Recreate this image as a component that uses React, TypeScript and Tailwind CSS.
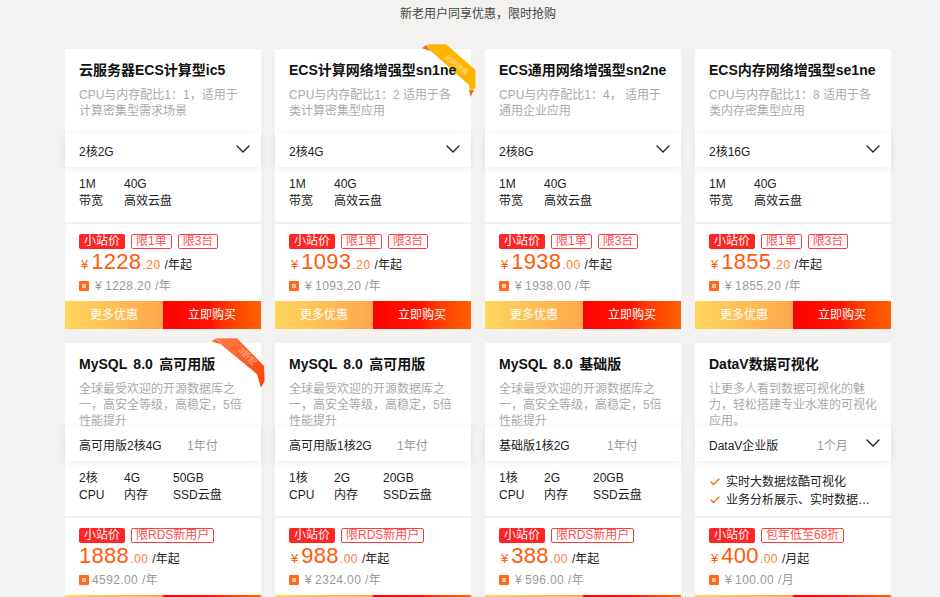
import { ChevronDown, Check } from "lucide-react";

type Product = {
  title: string;
  desc: string;
  option: string;
  term?: string;
  chevron?: boolean;
  specs?: string[][];
  checks?: string[];
  tags: string[];
  yen?: boolean;
  price: string;
  cents: string;
  unit: string;
  old: string;
  oldYen?: boolean;
  ribbon?: "gold" | "red";
};

const disk = [
  ["1M", "带宽"],
  ["40G", "高效云盘"],
];

const PRODUCTS: Product[] = [
  { title: "云服务器ECS计算型ic5", desc: "CPU与内存配比1：1，适用于计算密集型需求场景", option: "2核2G", chevron: true, specs: disk, tags: ["限1单", "限3台"], yen: true, price: "1228", cents: ".20", unit: "/年起", old: "1228.20 /年", oldYen: true },
  { title: "ECS计算网络增强型sn1ne", desc: "CPU与内存配比1：2 适用于各类计算密集型应用", option: "2核4G", chevron: true, specs: disk, tags: ["限1单", "限3台"], yen: true, price: "1093", cents: ".20", unit: "/年起", old: "1093.20 /年", oldYen: true, ribbon: "gold" },
  { title: "ECS通用网络增强型sn2ne", desc: "CPU与内存配比1：4， 适用于通用企业应用", option: "2核8G", chevron: true, specs: disk, tags: ["限1单", "限3台"], yen: true, price: "1938", cents: ".00", unit: "/年起", old: "1938.00 /年", oldYen: true },
  { title: "ECS内存网络增强型se1ne", desc: "CPU与内存配比1：8 适用于各类内存密集型应用", option: "2核16G", chevron: true, specs: disk, tags: ["限1单", "限3台"], yen: true, price: "1855", cents: ".20", unit: "/年起", old: "1855.20 /年", oldYen: true },
  { title: "MySQL 8.0 高可用版", desc: "全球最受欢迎的开源数据库之一，高安全等级，高稳定，5倍性能提升", option: "高可用版2核4G", term: "1年付", specs: [["2核", "CPU"], ["4G", "内存"], ["50GB", "SSD云盘"]], tags: ["限RDS新用户"], price: "1888", cents: ".00", unit: "/年起", old: "4592.00 /年", ribbon: "red" },
  { title: "MySQL 8.0 高可用版", desc: "全球最受欢迎的开源数据库之一，高安全等级，高稳定，5倍性能提升", option: "高可用版1核2G", term: "1年付", specs: [["1核", "CPU"], ["2G", "内存"], ["20GB", "SSD云盘"]], tags: ["限RDS新用户"], yen: true, price: "988", cents: ".00", unit: "/年起", old: "2324.00 /年", oldYen: true },
  { title: "MySQL 8.0 基础版", desc: "全球最受欢迎的开源数据库之一，高安全等级，高稳定，5倍性能提升", option: "基础版1核2G", term: "1年付", specs: [["1核", "CPU"], ["2G", "内存"], ["20GB", "SSD云盘"]], tags: ["限RDS新用户"], yen: true, price: "388", cents: ".00", unit: "/年起", old: "596.00 /年", oldYen: true },
  { title: "DataV数据可视化", desc: "让更多人看到数据可视化的魅力，轻松搭建专业水准的可视化应用。", option: "DataV企业版", term: "1个月", chevron: true, checks: ["实时大数据炫酷可视化", "业务分析展示、实时数据…"], tags: ["包年低至68折"], yen: true, price: "400", cents: ".00", unit: "/月起", old: "100.00 /月", oldYen: true },
];

const GoldRibbon = () => (
  <div className="absolute left-[147px] top-[-5px] h-[55px] w-[55px]">
    <svg width="55" height="55" viewBox="0 0 55 55" className="absolute inset-0">
      <path d="M0 4.3 L4 1 L9 7 Z" fill="#e8702a" />
      <path d="M47 46 L52 46 L48.5 53 Z" fill="#e8702a" />
      <path d="M5 .3 L24 .3 L53.5 26 L53.5 44 L48 47 L47 41 L7.7 6 Z" fill="#ffb400" />
    </svg>
    <span className="absolute left-[16px] top-[16px] w-[36px] rotate-[40deg] whitespace-nowrap text-center text-[7px] leading-[10px] text-white/60">
      全网特惠
    </span>
  </div>
);

const RedRibbon = () => (
  <div className="absolute left-[146px] top-[-5px] h-[55px] w-[55px]">
    <svg width="55" height="55" viewBox="0 0 55 55" className="absolute inset-0">
      <defs>
        <linearGradient id="rb-red" x1="0" y1="0" x2="1" y2="1">
          <stop offset="0" stopColor="#ff8048" />
          <stop offset="1" stopColor="#ff3c00" />
        </linearGradient>
      </defs>
      <path d="M.7 3.3 L4.7 .7 L9 6 Z" fill="#f2682e" />
      <path d="M47 40 L53.5 43 L50 50 Z" fill="#f2682e" />
      <path d="M4.7 .3 L26 .3 L53 28 L53.5 43 L50 48 L46 36 L9 5.7 Z" fill="url(#rb-red)" />
    </svg>
    <span className="absolute left-[18px] top-[14px] w-[36px] rotate-[45deg] whitespace-nowrap text-center text-[8px] leading-[10px] text-white/60">
      3折起
    </span>
  </div>
);

const Card = ({ p }: { p: Product }) => (
  <div className="relative flex h-[280px] w-[196px] flex-col bg-white">
    {p.ribbon === "gold" && <GoldRibbon />}
    {p.ribbon === "red" && <RedRibbon />}
    <div className="h-[84px] shrink-0 px-[14px] pt-[12px]">
      <h3 className="relative z-10 whitespace-nowrap text-[14px] font-bold leading-[18px] text-[#111] [word-spacing:2.5px]">{p.title}</h3>
      <p className="mt-[8px] text-[12px] leading-[16px] text-[#aaa]">{p.desc}</p>
    </div>
    <div className="relative flex h-[34px] shrink-0 items-center bg-white pl-[14px] pr-[6px] pt-[3px] shadow-[0_1px_8px_rgba(0,0,0,0.08)]">
      <span className="w-[108px] shrink-0 whitespace-nowrap text-[12px] text-[#222]">{p.option}</span>
      {p.term && <span className="text-[12px] text-[#999]">{p.term}</span>}
      {p.chevron && <ChevronDown className="ml-auto h-[24px] w-[24px] -translate-y-[3px] text-[#222]" strokeWidth={1.4} />}
    </div>
    <div className={`h-[57px] shrink-0 border-b-2 border-[#f2f2f2] px-[14px] ${p.checks ? "pt-[12px]" : "pt-[9px]"}`}>
      {p.specs && (
        <div className="flex text-[12px] leading-[17px] text-[#222]">
          {p.specs.map((col, i) => (
            <div key={col[1]} className={i === 0 ? "w-[45px]" : "w-[49px] whitespace-nowrap"}>
              <div>{col[0]}</div>
              <div>{col[1]}</div>
            </div>
          ))}
        </div>
      )}
      {p.checks && (
        <div className="flex flex-col text-[12px] leading-[18px] text-[#222]">
          {p.checks.map((c) => (
            <div key={c} className="flex items-center gap-[5px] whitespace-nowrap">
              <Check className="h-[12px] w-[12px] text-[#ff6a00]" strokeWidth={2.5} />
              <span>{c}</span>
            </div>
          ))}
        </div>
      )}
    </div>
    <div className="h-[77px] shrink-0 px-[14px] pt-[10px]">
      <div className="flex h-[15px] items-stretch gap-[6px] text-[12px] leading-[14px]">
        <span className="w-[46px] rounded-[2px] bg-[#ff2525] text-center text-white">小站价</span>
        {p.tags.map((t) => (
          <span key={t} className="whitespace-nowrap rounded-[2px] border border-[#ff3b3b] px-[4px] leading-[13px] text-[#ff4d4d]">
            {t}
          </span>
        ))}
      </div>
      <div className="flex h-[26px] items-baseline whitespace-nowrap text-[#ff5a0a]">
        {p.yen && <span className="ml-[2px] mr-[3px] text-[13px]">¥</span>}
        <span className="text-[22px] leading-[26px] tracking-[0.3px]">{p.price}</span>
        <span className="ml-[1px] text-[12px] tracking-[0.5px] text-[#ff7a33]">{p.cents}</span>
        <span className="ml-[4px] text-[12px] text-[#222]">{p.unit}</span>
      </div>
      <div className="mt-[3px] flex items-center text-[12px] leading-[16px] tracking-[0.4px] text-[#999]">
        <span className="mr-[3px] flex h-[10px] w-[10px] items-center justify-center rounded-[1px] bg-[#ff6a1a]">
          <span className="h-[4px] w-[4px] bg-[#ffc9a8]" />
        </span>
        {p.oldYen && <span className="ml-[3px] mr-[3px]">¥</span>}
        <span>{p.old}</span>
      </div>
    </div>
    <div className="flex h-[28px] shrink-0 text-[12px] leading-[28px] text-white">
      <div className="w-[98px] bg-gradient-to-r from-[#ffd65c] to-[#ffa64d] text-center">更多优惠</div>
      <div className="w-[98px] bg-gradient-to-r from-[#ff0000] via-[#ff1500] to-[#ff6000] text-center">立即购买</div>
    </div>
  </div>
);

export default function App() {
  return (
    <div
      className="h-[597px] w-[940px] overflow-hidden bg-[#f3f2f0]"
      style={{ fontFamily: '"Liberation Sans", "Noto Sans CJK SC", sans-serif' }}
    >
      <p className="pl-[16px] pt-[6px] text-center text-[12px] leading-[16px] text-[#444]">新老用户同享优惠，限时抢购</p>
      <div className="mt-[27px] grid grid-cols-[repeat(4,196px)] gap-[14px] pl-[65px]">
        {PRODUCTS.map((p, i) => (
          <Card key={i} p={p} />
        ))}
      </div>
    </div>
  );
}
